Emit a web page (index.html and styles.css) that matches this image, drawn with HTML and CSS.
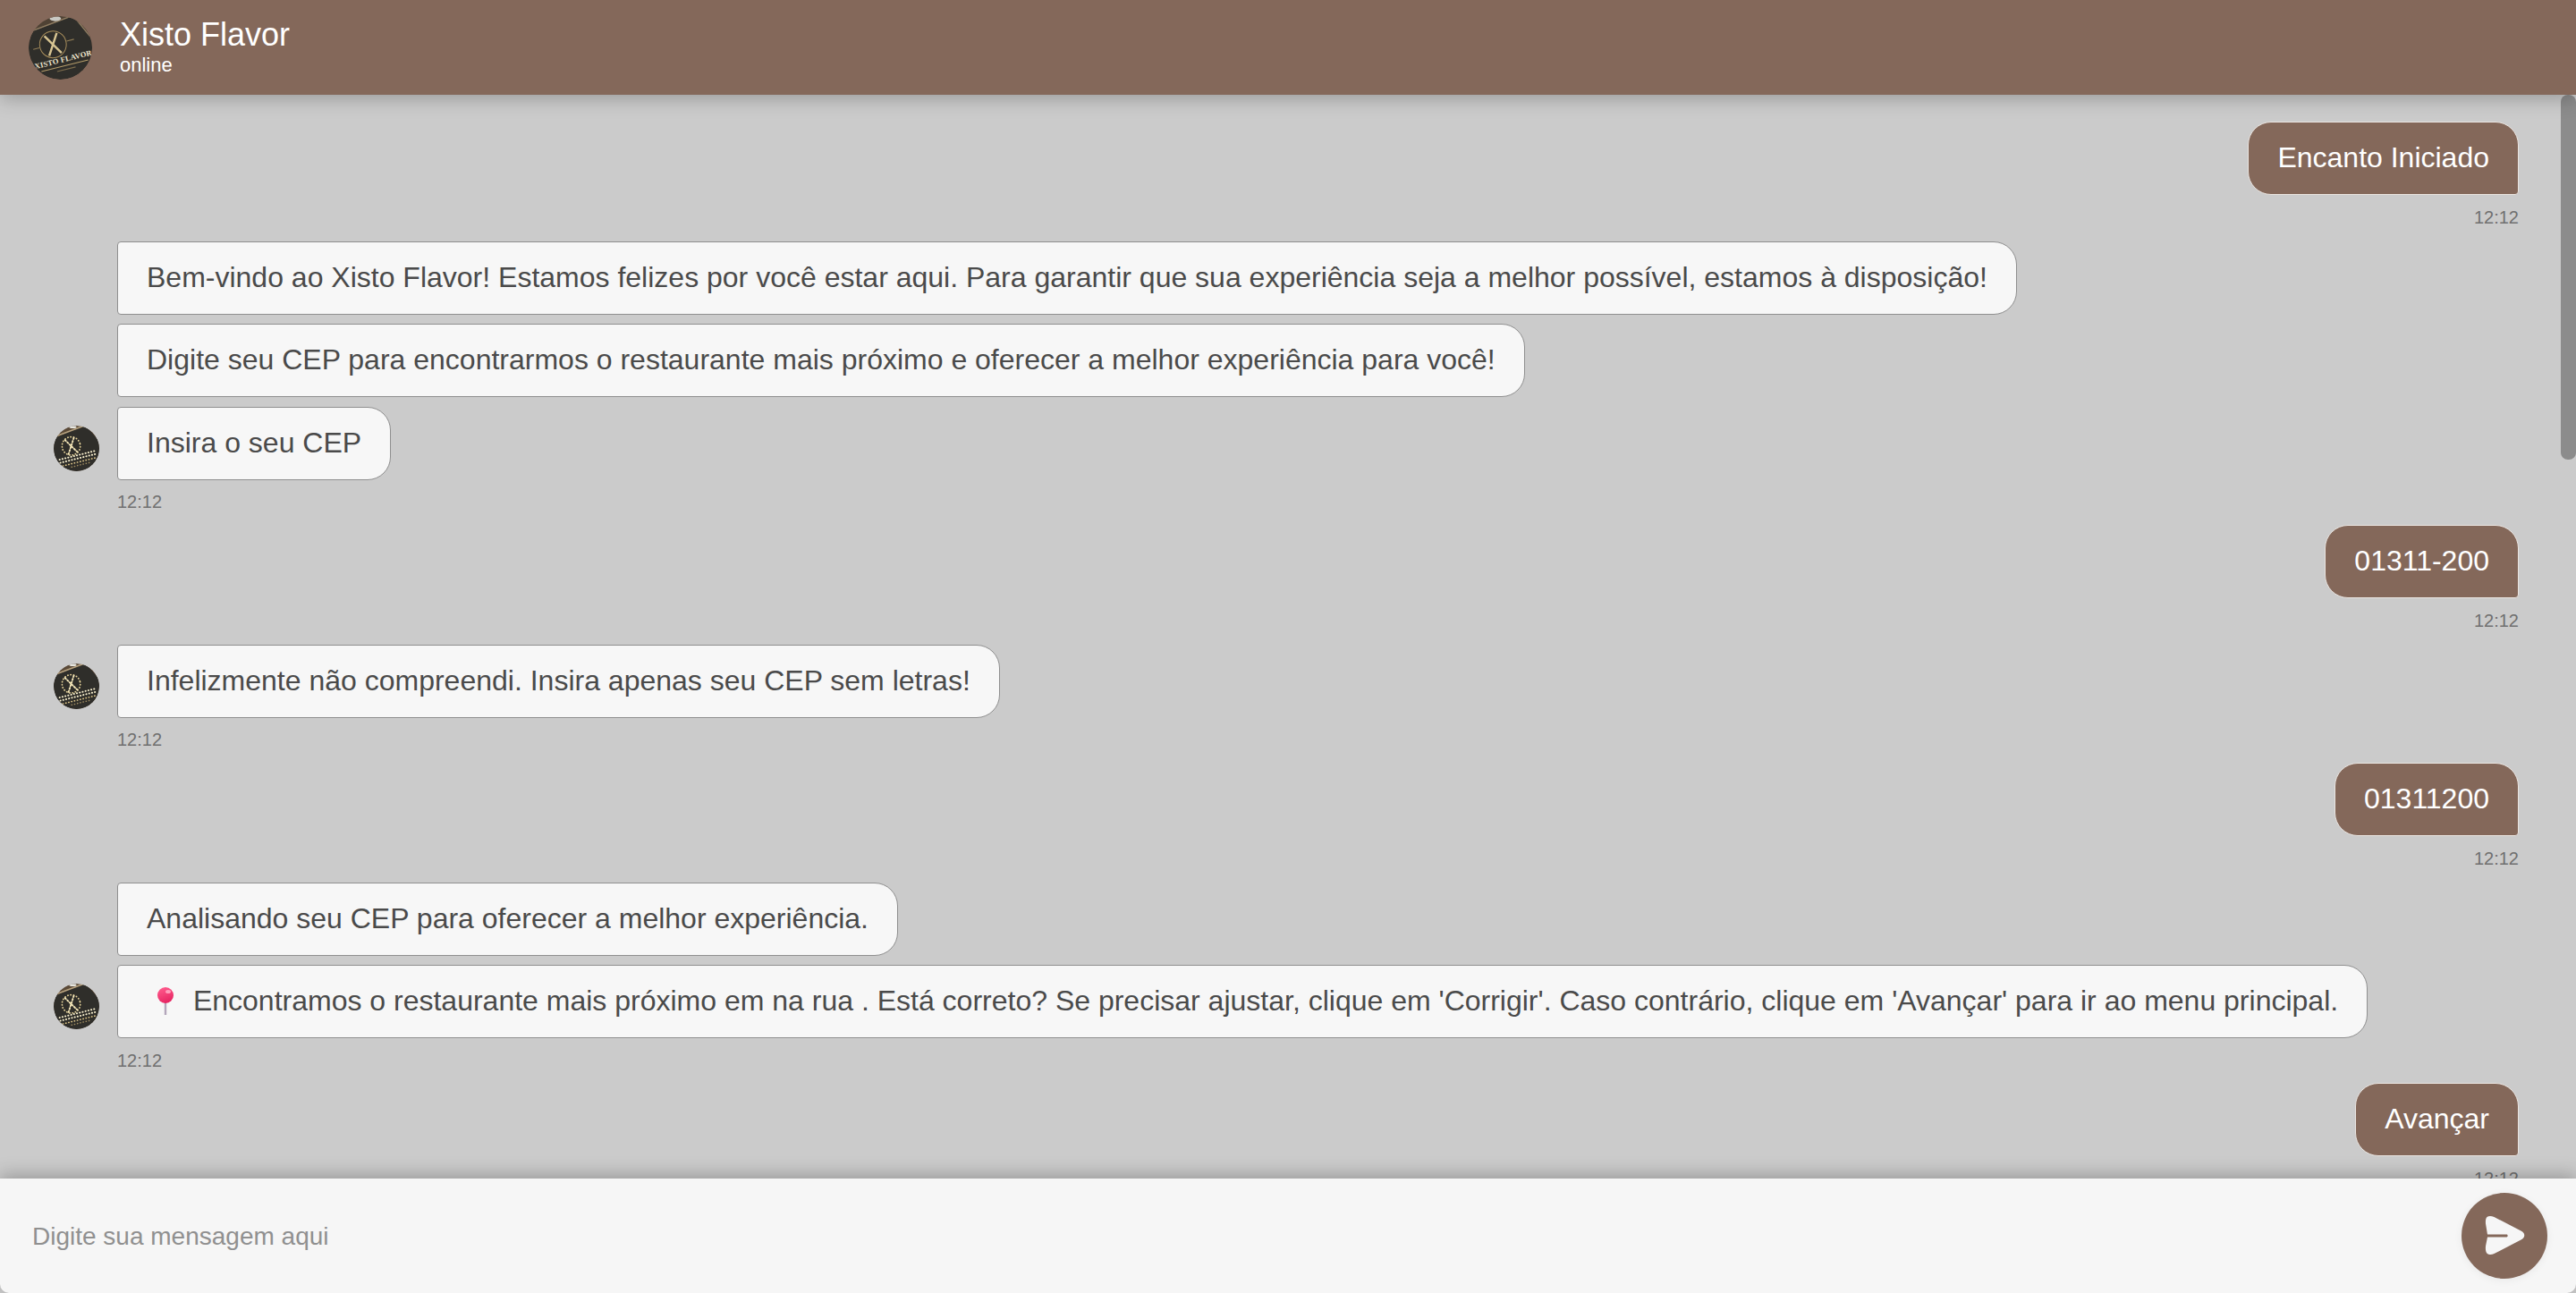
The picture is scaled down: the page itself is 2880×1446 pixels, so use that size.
FILE: index.html
```html
<!DOCTYPE html>
<html lang="pt-BR">
<head>
<meta charset="utf-8">
<title>Xisto Flavor</title>
<link rel="stylesheet" href="styles.css">
</head>
<body>
<svg class="defs" width="0" height="0" aria-hidden="true">
  <defs>
    <clipPath id="logo-clip"><circle cx="50" cy="50" r="50"/></clipPath>
    <linearGradient id="pin-ball" x1="0.3" y1="0" x2="0.7" y2="1">
      <stop offset="0" stop-color="#ff5a8c"/>
      <stop offset="1" stop-color="#e5215f"/>
    </linearGradient>
    <g id="logo">
      <g clip-path="url(#logo-clip)">
        <rect width="100" height="100" fill="#4f4234"/>
        <path d="M-10 30 L70 0 L118 55 L118 110 L-10 110Z" fill="#2f2e2a"/>
        <path d="M-10 29 L70 -1 L100 36" stroke="#8f7d62" stroke-width="2" fill="none"/>
        <ellipse cx="42" cy="4" rx="9" ry="4" fill="#c9c9c4"/>
        <g transform="rotate(-14 50 50)">
          <circle cx="40" cy="42" r="21" fill="none" stroke="#a98f5c" stroke-width="1.4"/>
          <path d="M30 26 L50 58 M50 26 L30 58" stroke="#d8c592" stroke-width="3.4"/>
          <path d="M8 42 H18 M62 42 H74" stroke="#8f7b55" stroke-width="1.5"/>
          <text x="50" y="73" class="logo-text">XISTO FLAVOR</text>
          <path d="M12 79 H88" stroke="#b49c6a" stroke-width="1.5"/>
          <path d="M36 85 H66" stroke="#7c6c4c" stroke-width="1.5"/>
        </g>
      </g>
    </g>
    <g id="logo-small">
      <g clip-path="url(#logo-clip)">
        <rect width="100" height="100" fill="#5b4a38"/>
        <path d="M-10 30 L70 0 L118 55 L118 110 L-10 110Z" fill="#2f2e2a"/>
        <path d="M-10 29 L70 -1" stroke="#b7a27f" stroke-width="3" fill="none"/>
        <ellipse cx="42" cy="3" rx="8" ry="3" fill="#e6e6e0"/>
        <g transform="rotate(-14 50 50)" fill="none" stroke-linecap="round">
          <circle cx="40" cy="42" r="20" stroke="#e8d49a" stroke-width="3.4" stroke-dasharray="0.5 6"/>
          <path d="M30 26 L50 58 M50 26 L30 58" stroke="#f8eabc" stroke-width="3.6" stroke-dasharray="3 4"/>
          <path d="M8 65 H92 M8 72 H92" stroke="#fbf2d0" stroke-width="3.8" stroke-dasharray="0.5 6"/>
          <path d="M12 80 H88" stroke="#e2c98a" stroke-width="3.2" stroke-dasharray="0.5 6"/>
          <path d="M30 87 H70" stroke="#a08c60" stroke-width="3" stroke-dasharray="0.5 6"/>
        </g>
      </g>
    </g>
  </defs>
</svg>
<div class="app">
  <header class="topbar">
    <svg class="logo logo-lg" viewBox="0 0 100 100" role="img" aria-label="Xisto Flavor"><use href="#logo"/></svg>
    <div class="contact">
      <div class="contact-name">Xisto Flavor</div>
      <div class="contact-status">online</div>
    </div>
  </header>

  <div class="chat">
    <main class="messages">
      <section class="turn turn-user">
        <div class="bubble bubble-user">Encanto Iniciado</div>
        <time class="stamp">12:12</time>
      </section>

      <section class="turn turn-bot">
        <div class="bot-row"><div class="bubble bubble-bot">Bem-vindo ao Xisto Flavor! Estamos felizes por você estar aqui. Para garantir que sua experiência seja a melhor possível, estamos à disposição!</div></div>
        <div class="bot-row"><div class="bubble bubble-bot">Digite seu CEP para encontrarmos o restaurante mais próximo e oferecer a melhor experiência para você!</div></div>
        <div class="bot-row"><svg class="logo logo-sm" viewBox="0 0 100 100" aria-hidden="true"><use href="#logo-small"/></svg><div class="bubble bubble-bot">Insira o seu CEP</div></div>
        <time class="stamp">12:12</time>
      </section>

      <section class="turn turn-user">
        <div class="bubble bubble-user">01311-200</div>
        <time class="stamp">12:12</time>
      </section>

      <section class="turn turn-bot">
        <div class="bot-row"><svg class="logo logo-sm" viewBox="0 0 100 100" aria-hidden="true"><use href="#logo-small"/></svg><div class="bubble bubble-bot">Infelizmente não compreendi. Insira apenas seu CEP sem letras!</div></div>
        <time class="stamp">12:12</time>
      </section>

      <section class="turn turn-user">
        <div class="bubble bubble-user">01311200</div>
        <time class="stamp">12:12</time>
      </section>

      <section class="turn turn-bot">
        <div class="bot-row"><div class="bubble bubble-bot">Analisando seu CEP para oferecer a melhor experiência.</div></div>
        <div class="bot-row"><svg class="logo logo-sm" viewBox="0 0 100 100" aria-hidden="true"><use href="#logo-small"/></svg><div class="bubble bubble-bot"><svg class="pin" viewBox="0 0 43 31" role="img" aria-label="📍"><rect x="19.8" y="14" width="2.4" height="17" fill="#b3a6bb"/><circle cx="21" cy="9" r="9" fill="url(#pin-ball)"/><ellipse cx="24" cy="5" rx="3" ry="2" fill="#ff9dbb"/></svg> Encontramos o restaurante mais próximo em na rua . Está correto? Se precisar ajustar, clique em 'Corrigir'. Caso contrário, clique em 'Avançar' para ir ao menu principal.</div></div>
        <time class="stamp">12:12</time>
      </section>

      <section class="turn turn-user">
        <div class="bubble bubble-user">Avançar</div>
        <time class="stamp">12:12</time>
      </section>
    </main>
    <div class="scroll-thumb"></div>
  </div>

  <footer class="composer">
    <input class="composer-input" type="text" placeholder="Digite sua mensagem aqui">
    <button class="send" type="button" aria-label="Enviar">
      <svg class="send-icon" viewBox="1.5 0 48 48" aria-hidden="true">
        <path d="M6 3 C8 1.6 11 1.8 14 3 L44 18.5 C49 21 49 26 44 28.5 L14 44 C11 45.5 7 45.5 5.5 43 C4.4 41.2 4.2 38 4.6 35 L6.5 25.4 L28 25.4 C29.5 25.4 29.5 22.6 28 22.6 L6.5 22.6 L4.6 11 C4.2 8 4.4 4.4 6 3Z" fill="#f6f6f6"/>
      </svg>
    </button>
  </footer>
</div>
</body>
</html>
```

FILE: styles.css
```css
* { box-sizing: border-box; }
html, body { height: 100%; margin: 0; }
body {
  font-family: "Liberation Sans", Arial, sans-serif;
  background: #cbcbcb;
  overflow: hidden;
}
.defs { position: absolute; }
.logo-text {
  font-family: "Liberation Serif", serif;
  font-size: 12px;
  font-weight: 700;
  letter-spacing: .3px;
  fill: #f0e6cf;
  text-anchor: middle;
}
.app {
  display: flex;
  flex-direction: column;
  height: 1446px;
}
.topbar {
  flex: 0 0 106px;
  display: flex;
  align-items: center;
  gap: 31px;
  padding: 0 0 0 32px;
  background: #84685a;
  color: #fff;
  box-shadow: 0 4px 20px rgba(0, 0, 0, .25);
  position: relative;
  z-index: 2;
}
.logo { display: block; flex: none; border-radius: 50%; }
.logo-lg { width: 71px; height: 71px; }
.logo-sm { width: 51px; height: 51px; position: absolute; left: 60px; margin-top: 11px; }
.contact-name { font-size: 36px; line-height: 40px; margin-top: -2px; }
.contact-status { font-size: 22px; line-height: 26px; margin-top: 1px; }
.chat {
  flex: 1;
  min-height: 0;
  position: relative;
  overflow: hidden;
}
.messages {
  height: 100%;
  overflow: hidden;
  padding: 30.5px 64px 30px 131px;
  display: flex;
  flex-direction: column;
}
.scroll-thumb {
  position: absolute;
  top: 0;
  right: 0;
  width: 17px;
  height: 408px;
  background: #8c8c8c;
  border-radius: 8px;
}
.turn { display: flex; flex-direction: column; flex: none; }
.turn-user { align-items: flex-end; margin-top: -1px; }
.turn-bot { align-items: flex-start; }
.bot-row { display: flex; align-items: center; margin-bottom: 10.5px; }
.bubble {
  font-size: 32px;
  line-height: 37px;
  padding: 21px 32px 20px;
  height: 82px;
  white-space: nowrap;
}
.bubble-user {
  background: #84685a;
  color: #fff;
  border: 1px solid #ebe6e2;
  border-radius: 26px 26px 4px 26px;
}
.bubble-bot {
  background: #f7f7f7;
  color: #4a4a4a;
  border: 1px solid #8f8f8f;
  border-radius: 4px 26px 26px 4px;
}
.pin {
  display: inline-block;
  width: 43px;
  height: 31px;
  vertical-align: -5px;
}
.stamp {
  font-size: 20px;
  line-height: 23px;
  color: #707070;
}
.turn-user .stamp { margin-top: 14px; margin-bottom: 15px; }
.turn-bot .stamp { margin-top: 3px; margin-bottom: 14.5px; }
.composer {
  flex: 0 0 128px;
  display: flex;
  align-items: center;
  justify-content: space-between;
  padding: 0 32px 0 36px;
  background: #f6f6f6;
  box-shadow: 0 -4px 20px rgba(0, 0, 0, .25);
  border-radius: 0 0 10px 10px;
  position: relative;
  z-index: 2;
}
.composer-input {
  flex: 1;
  border: 0;
  outline: 0;
  background: transparent;
  padding: 1px 0 0;
  font: 28px "Liberation Sans", Arial, sans-serif;
  color: #4a4a4a;
}
.composer-input::placeholder { color: #909090; opacity: 1; }
.send {
  flex: none;
  width: 96px;
  height: 96px;
  padding: 0;
  border: 0;
  border-radius: 50%;
  background: #84685a;
  display: flex;
  align-items: center;
  justify-content: center;
  box-shadow: 0 2px 10px rgba(0, 0, 0, .06);
}
.send-icon { width: 48px; height: 48px; display: block; }
```
